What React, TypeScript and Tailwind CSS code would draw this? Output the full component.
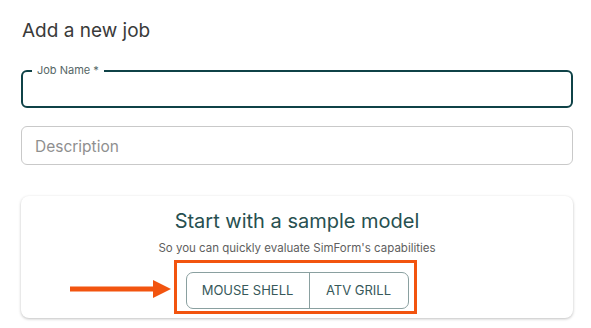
import React from "react";

export default function App() {
  return (
    <div
      className="w-[591px] h-[328px] bg-white overflow-hidden relative"
      style={{ fontFamily: "Inter, 'Noto Sans', sans-serif" }}
    >
      <div className="pl-[21px] pr-[18px] pt-[19px]">
        <h1 className="text-[19px] leading-[24px] text-[#3a3a3a] font-normal pl-[1px]">Add a new job</h1>

        <div className="relative mt-[27px] h-[38px] rounded-[6px] border-2 border-[#0f4247]">
          <span className="absolute -top-[9px] left-[9px] bg-white px-[5px] text-[11px] leading-[14px] text-[#556666]">
            Job Name *
          </span>
        </div>

        <div className="mt-[18px] h-[39px] rounded-[6px] border border-[#c9c9c9] flex items-center px-[13px] pt-[3px]">
          <span className="text-[15.5px] text-[#8f8f8f]">Description</span>
        </div>

        <div className="mt-[31px] h-[122px] rounded-[8px] bg-white shadow-[0_1px_3px_rgba(0,0,0,0.25)] flex flex-col items-center pt-[12px]">
          <div className="text-[20px] leading-[26px] text-[#275050]">Start with a sample model</div>
          <div className="mt-[6px] text-[11.5px] leading-[16px] text-[#606060]">
            So you can quickly evaluate SimForm's capabilities
          </div>
          <div className="mt-[16px] flex h-[37px] rounded-[7px] border border-[#8aa0a0] overflow-hidden">
            <button className="w-[123px] text-[13px] text-[#37595a] border-r border-[#8aa0a0]">MOUSE SHELL</button>
            <button className="w-[98px] text-[13px] text-[#37595a]">ATV GRILL</button>
          </div>
        </div>
      </div>

      <div className="absolute left-[174px] top-[260px] w-[243px] h-[54px] border-[3.5px] border-[#f2540f]" />
      <svg className="absolute left-[70px] top-[280px]" width="101" height="18" viewBox="0 0 101 18">
        <rect x="0" y="6.5" width="86" height="5" fill="#f2540f" />
        <polygon points="83,0 101,9 83,18" fill="#f2540f" />
      </svg>
    </div>
  );
}
